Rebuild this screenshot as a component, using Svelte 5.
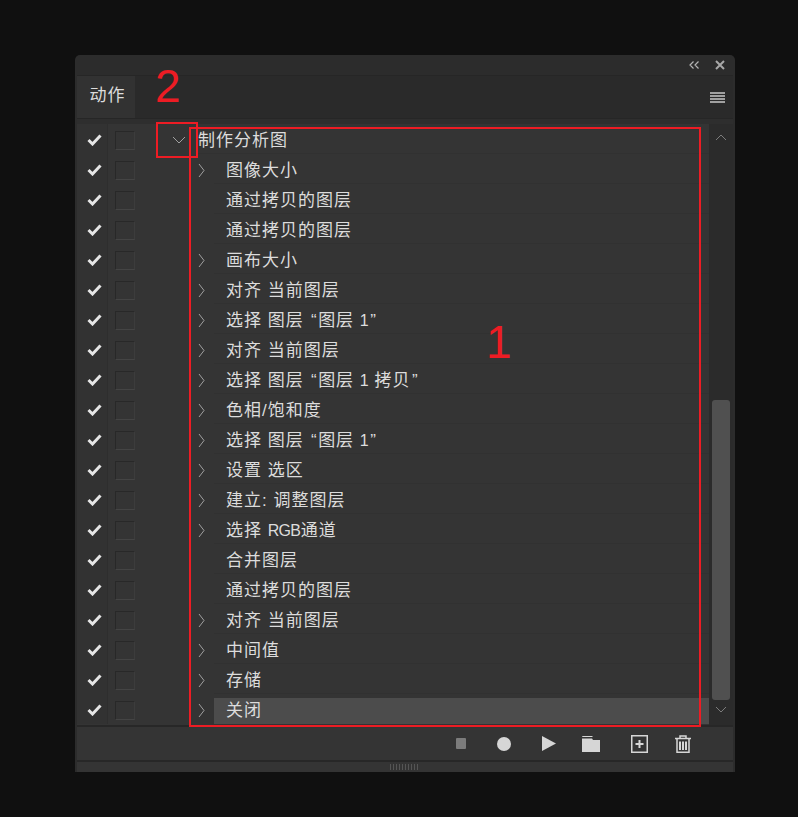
<script lang="ts">
  const steps = [
    { label: "图像大小", open: true },
    { label: "通过拷贝的图层", open: false },
    { label: "通过拷贝的图层", open: false },
    { label: "画布大小", open: true },
    { label: "对齐 当前图层", open: true },
    { label: "选择 图层 “图层 1”", open: true },
    { label: "对齐 当前图层", open: true },
    { label: "选择 图层 “图层 1 拷贝”", open: true },
    { label: "色相/饱和度", open: true },
    { label: "选择 图层 “图层 1”", open: true },
    { label: "设置 选区", open: true },
    { label: "建立: 调整图层", open: true },
    { label: "选择 RGB通道", open: true },
    { label: "合并图层", open: false },
    { label: "通过拷贝的图层", open: false },
    { label: "对齐 当前图层", open: true },
    { label: "中间值", open: true },
    { label: "存储", open: true },
    { label: "关闭", open: true, selected: true }
  ];

  // latin runs and quotes are set tighter than the CJK text around them
  function parts(label: string) {
    return label.split(/([A-Za-z0-9]+|[“”])/).filter(Boolean);
  }
  const isLatin = (s: string) => /^[A-Za-z0-9]+$/.test(s);
  const isQuote = (s: string) => s === "“" || s === "”";
</script>

{#snippet check()}
  <span class="check-cell">
    <svg width="15" height="12" viewBox="0 0 15 12"><path d="M1.5 6 L5.5 10 L13.5 1.5" fill="none" stroke="#e6e6e6" stroke-width="3"/></svg>
  </span>
  <span class="box-cell"><span class="box"></span></span>
{/snippet}

<div class="panel">
  <div class="titlebar">
    <svg width="10" height="8" viewBox="0 0 10 8"><path d="M4.5 0.5 L1 4 L4.5 7.5 M9.5 0.5 L6 4 L9.5 7.5" fill="none" stroke="#b4b4b4" stroke-width="1.2"/></svg>
    <svg width="10" height="10" viewBox="0 0 10 10"><path d="M1 1 L9 9 M9 1 L1 9" fill="none" stroke="#a8a8a8" stroke-width="2"/></svg>
  </div>

  <div class="tabrow">
    <div class="tab">动作</div>
    <div class="menu"><i></i><i></i><i></i><i></i></div>
  </div>

  <div class="body">
    <div class="list">
      <div class="row">
        {@render check()}
        <span class="twist head">
          <svg width="14" height="8" viewBox="0 0 14 8"><path d="M1 1 L7 7 L13 1" fill="none" stroke="#a0a0a0"/></svg>
        </span>
        <span class="title">制作分析图</span>
      </div>
      {#each steps as step}
        <div class="row">
          {@render check()}
          <span class="twist">
            {#if step.open}
              <svg width="7" height="15" viewBox="0 0 7 15"><path d="M1 1 L6 7.5 L1 14" fill="none" stroke="#a0a0a0"/></svg>
            {/if}
          </span>
          <span class={["label", { selected: step.selected }]}>
            {#each parts(step.label) as part}
              {#if isLatin(part)}<span class="latin">{part}</span>{:else if isQuote(part)}<span class="quote">{part}</span>{:else}{part}{/if}
            {/each}
          </span>
        </div>
      {/each}
    </div>
    <div class="scroll">
      <svg width="12" height="7" viewBox="0 0 12 7"><path d="M1 6 L6 1 L11 6" fill="none" stroke="#7c7c7c"/></svg>
      <div class="track"><div class="thumb"></div></div>
      <svg width="12" height="7" viewBox="0 0 12 7"><path d="M1 1 L6 6 L11 1" fill="none" stroke="#7c7c7c"/></svg>
    </div>
  </div>

  <div class="footer">
    <span class="stop"></span>
    <span class="record"></span>
    <svg class="play" width="14" height="15" viewBox="0 0 14 15"><path d="M0 0 L14 7.5 L0 15 Z" fill="#d6d6d6"/></svg>
    <svg class="folder" width="18" height="16" viewBox="0 0 18 16"><path d="M0.5 0 H10 L11 1 H0 Z M0 2.5 H10 L11 4 H18 V16 H0 Z" fill="#d6d6d6"/></svg>
    <svg class="add" width="17" height="18" viewBox="0 0 17 18"><rect x="0.75" y="0.75" width="15.5" height="16.5" fill="none" stroke="#d6d6d6" stroke-width="1.5"/><path d="M8.5 5 V13 M4.5 9 H12.5" stroke="#d6d6d6" stroke-width="2"/></svg>
    <svg class="trash" width="16" height="18" viewBox="0 0 16 18"><path d="M5 3 V1 H11 V3 M0 3.5 H16" fill="none" stroke="#d6d6d6" stroke-width="1.5"/><path d="M2 4 V17.25 H14 V4" fill="none" stroke="#d6d6d6" stroke-width="1.5"/><path d="M5 6.5 V15 M8 6.5 V15 M11 6.5 V15" stroke="#d6d6d6" stroke-width="2"/></svg>
  </div>
  <div class="grip"><span></span></div>

  <div class="mark mark-list"></div>
  <div class="mark mark-twist"></div>
  <div class="digit digit-1">1</div>
  <div class="digit digit-2">2</div>
</div>

<style>
  :global(body) {
    background: #101010;
  }

  .panel {
    position: relative;
    box-sizing: border-box;
    width: 660px;
    height: 717px;
    margin: 55px 0 45px 75px;
    padding: 0 2px 0 2px;
    background: #2c2c2c;
    border-radius: 5px 5px 0 0;
    font-family: "Liberation Sans", "Noto Sans CJK SC", sans-serif;
    color: #dcdcdc;
    display: flex;
    flex-direction: column;
  }

  .titlebar {
    height: 20px;
    display: flex;
    align-items: center;
    justify-content: flex-end;
    gap: 16px;
    padding-right: 8px;
    border-bottom: 1px solid #262626;
  }

  .tabrow {
    height: 42px;
    display: flex;
    align-items: stretch;
    justify-content: space-between;
    background: #2a2a2a;
    border-bottom: 1px solid #262626;
  }

  .tab {
    width: 58px;
    box-sizing: border-box;
    padding: 0 0 8px 3px;
    background: #323232;
    font-size: 17px;
    letter-spacing: 1px;
    display: flex;
    align-items: center;
    justify-content: center;
  }

  .menu {
    display: flex;
    flex-direction: column;
    justify-content: center;
    gap: 1px;
    padding-right: 8px;
  }

  .menu i {
    display: block;
    width: 15px;
    height: 2px;
    background: #a0a0a0;
  }

  .body {
    flex: 1;
    display: flex;
    min-height: 0;
    padding-top: 5px;
    background: #2e2e2e;
    border-bottom: 2px solid #272727;
  }

  .list {
    flex: 1;
    display: flex;
    flex-direction: column;
    background: #343434;
  }

  .row {
    height: 30px;
    display: flex;
    align-items: center;
  }

  .check-cell {
    width: 31px;
    height: 100%;
    flex: none;
    display: flex;
    align-items: center;
    justify-content: center;
    padding: 2px 0 0 4px;
    background: #323232;
    border-right: 1px solid #2e2e2e;
    box-sizing: border-box;
  }

  .box-cell {
    width: 35px;
    height: 100%;
    flex: none;
    display: flex;
    align-items: center;
    padding: 3px 0 0 7px;
    box-sizing: border-box;
  }

  .box {
    width: 20px;
    height: 19px;
    box-sizing: border-box;
    border: 1px solid #282828;
    border-bottom-color: #444;
    border-right-color: #3c3c3c;
  }

  .twist {
    width: 71px;
    height: 100%;
    flex: none;
    display: flex;
    align-items: center;
    justify-content: flex-end;
    padding: 2px 9px 0 0;
    box-sizing: border-box;
  }

  .twist.head {
    width: 55px;
    padding-right: 12px;
  }

  .title {
    flex: 1;
    font-size: 17px;
    letter-spacing: 1px;
    line-height: 33px;
    border-bottom: 1px solid #313131;
    height: 100%;
    box-sizing: border-box;
  }

  .label {
    flex: 1;
    height: 100%;
    box-sizing: border-box;
    font-size: 17px;
    letter-spacing: 1px;
    line-height: 33px;
    padding-left: 12px;
    border-bottom: 1px solid #313131;
    white-space: nowrap;
  }

  .latin {
    font-size: 16px;
    letter-spacing: -0.8px;
    margin-right: 0.8px;
  }

  .quote {
    letter-spacing: 0;
    padding: 0 1.5px;
  }

  .label.selected {
    background: linear-gradient(transparent 4px, #4c4c4c 4px);
    border-bottom: none;
  }

  .scroll {
    width: 24px;
    flex: none;
    display: flex;
    flex-direction: column;
    align-items: center;
    padding: 10px 0 12px;
    box-sizing: border-box;
    background: #2b2b2b;
  }

  .track {
    flex: 1;
    width: 18px;
    margin: 5px 0 6px;
    display: flex;
    flex-direction: column;
    justify-content: flex-end;
  }

  .thumb {
    height: 300px;
    background: #505050;
    border-radius: 3px;
  }

  .footer {
    height: 33px;
    display: flex;
    align-items: center;
    justify-content: flex-end;
    padding-right: 42px;
    background: #343434;
    border-bottom: 2px solid #272727;
    box-sizing: content-box;
  }

  .stop {
    width: 10px;
    height: 11px;
    border-radius: 1px;
    background: #7c7c7c;
  }

  .record {
    width: 14px;
    height: 14px;
    margin-left: 31px;
    border-radius: 50%;
    background: #d6d6d6;
  }

  .play {
    margin-left: 31px;
  }

  .folder {
    margin-left: 26px;
  }

  .add {
    margin-left: 31px;
  }

  .trash {
    margin-left: 27px;
  }

  .grip {
    flex: none;
    height: 10px;
    background: #343434;
    display: flex;
    justify-content: center;
    align-items: center;
  }

  .grip span {
    width: 30px;
    height: 6px;
    background: repeating-linear-gradient(90deg, #555 0 1px, transparent 1px 3px);
  }

  .mark {
    position: absolute;
    border: 2px solid #ed1c24;
    box-sizing: border-box;
  }

  .mark-list {
    left: 114px;
    top: 72px;
    width: 512px;
    height: 600px;
  }

  .mark-twist {
    left: 81px;
    top: 67px;
    width: 42px;
    height: 36px;
  }

  .digit {
    position: absolute;
    color: #ed1c24;
    font-family: "Liberation Sans", sans-serif;
    font-size: 46px;
    line-height: 1;
  }

  .digit-1 {
    left: 411px;
    top: 264px;
  }

  .digit-2 {
    left: 80px;
    top: 8px;
  }
</style>
